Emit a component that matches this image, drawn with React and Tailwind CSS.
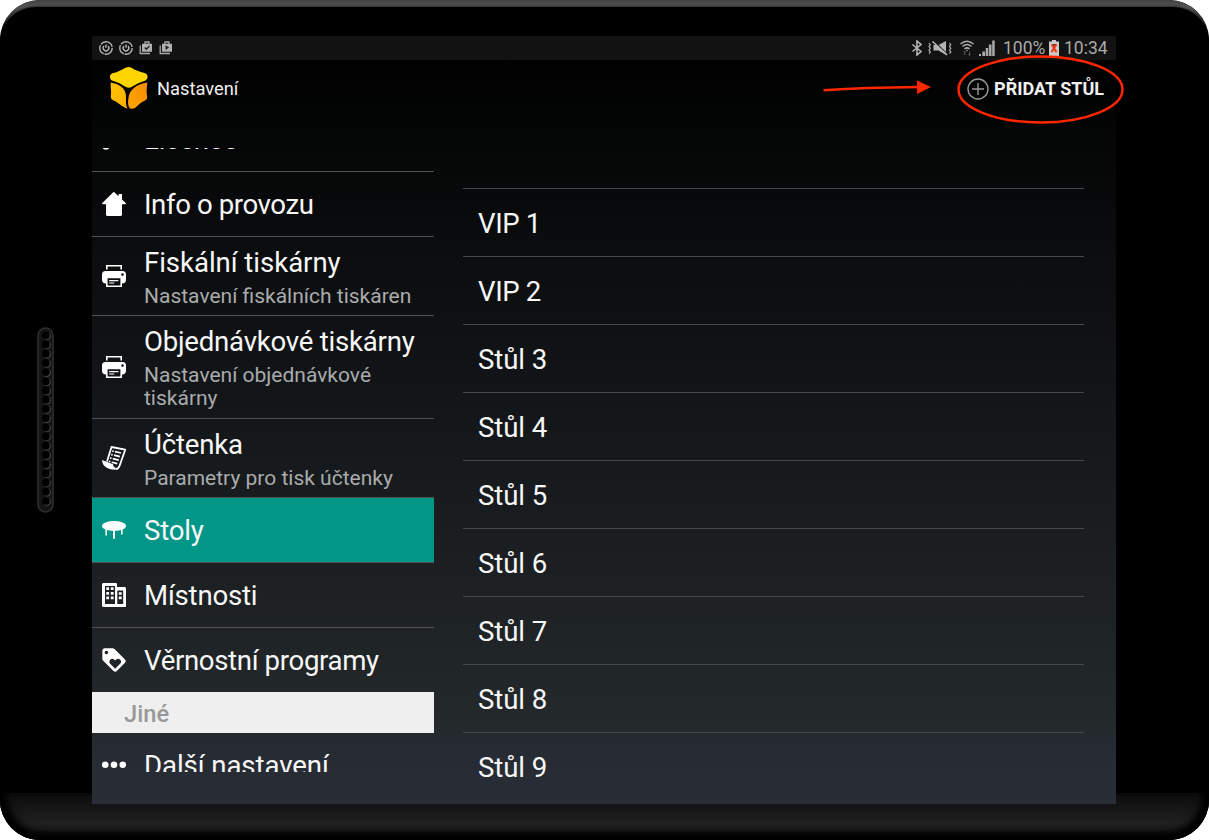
import React from "react";
import { MdLoyalty } from "react-icons/md";

const tables = ["VIP 1", "VIP 2", "Stůl 3", "Stůl 4", "Stůl 5", "Stůl 6", "Stůl 7", "Stůl 8", "Stůl 9"];

function KeyIcon() {
  return (
    <svg className="size-6" viewBox="0 0 24 24" fill="#fff">
      <path d="M15 0a9 9 0 1 1-2.500 17.600L10 18H7v3a1.500 1.500 0 0 1-1.500 1.400H2.500A1.500 1.500 0 0 1 1 21v-5L7 10.500A9 9 0 0 1 15 0z" />
    </svg>
  );
}

function HomeIcon() {
  return (
    <svg className="size-6" viewBox="0 0 24 24" fill="#fff">
      <path d="M12 0 16.600 4.300V2H20v5.500l3.700 3.600c.6.600.3 1.200-.5 1.200H20v10.200c0 .8-.6 1.500-1.500 1.500h-13C4.600 24 4 23.300 4 22.500V12.300H.8c-.8 0-1.100-.6-.5-1.200L11 .5c.4-.4.7-.5 1-.5z" />
    </svg>
  );
}

function PrinterIcon() {
  return (
    <svg className="size-6" viewBox="0 0 24 24">
      <path fill="#fff" d="M4 1h16v4.500h-1.600V2.400H5.600v3.100H4z" />
      <path fill="#fff" fillRule="evenodd" d="M3.500 7h17A3.500 3.500 0 0 1 24 10.500v5a4 4 0 0 1-4 4v3.500H4v-3.500a4 4 0 0 1-4-4v-5A3.500 3.500 0 0 1 3.500 7zM5.600 14.200v7.200h12.800v-7.200zM20.500 9.300a1.300 1.300 0 1 0 0 2.600 1.300 1.300 0 0 0 0-2.600z" />
      <path stroke="#fff" strokeWidth="1.200" d="M7.200 16.600h9.200M7.200 19h5" />
    </svg>
  );
}

function ReceiptIcon() {
  return (
    <svg className="size-6" viewBox="0 0 24 24">
      <path fill="none" stroke="#fff" strokeWidth="1.800" strokeLinejoin="round" d="M5 15.500 9.500 1l13.700 2.700L17.500 20c-.8 2.200-2 3.100-4 3" />
      <path fill="#fff" d="M0 14l11 4.300c.2 2 .8 3 2.700 3.500l-.5 2C7 23.500.5 21.500 0 14z" />
      <path stroke="#fff" strokeWidth="1.700" d="m10.200 5 1.500.4M13 5.700l6 1.300M9.100 8.500l1.500.4M11.900 9.200l6 1.400M8 12l1.500.4M10.800 12.700l6 1.400M7 15.300l1.300.4M9.700 16.200l5.600 1.400" />
    </svg>
  );
}

function TableIcon() {
  return (
    <svg className="size-6" viewBox="0 0 24 24" fill="#fff">
      <ellipse cx="12" cy="8" rx="12" ry="5" />
      <path d="M3.400 11H5v6a.7.700 0 0 1-1.600 0zM11 12h2v8a1 1 0 0 1-2 0zM19 11h1.600v5a.7.700 0 0 1-1.600 0z" />
    </svg>
  );
}

function BuildingIcon() {
  return (
    <svg className="size-6" viewBox="0 0 24 24">
      <path fill="#fff" fillRule="evenodd" d="M1.500 0h12.300c.7 0 1.200.500 1.200 1.200V4h7.500c.9 0 1.500.600 1.500 1.500V24H1.500A1.500 1.500 0 0 1 0 22.500v-21C0 .7.700 0 1.500 0zM3 3v18h10V3zM15.300 7.500V21h5.900V7.500z" />
      <path fill="#fff" d="M4.300 4.300h2.800v2.800H4.300zM8.800 4.300h2.800v2.800H8.800zM4.300 8.900h2.800v2.800H4.300zM8.800 8.900h2.800v2.800H8.800zM4.300 13.500h2.800v2.800H4.300zM8.800 13.500h2.800v2.800H8.800zM16.800 9.200h2.900v2.600h-2.900zM16.800 13.600h2.900v2.700h-2.900z" />
    </svg>
  );
}

function LoyaltyIcon() {
  return <MdLoyalty className="-m-0.5 size-7 shrink-0 text-white" />;
}

function DotsIcon() {
  return (
    <svg className="size-6" viewBox="0 0 24 24" fill="#fff">
      <circle cx="3.200" cy="10.700" r="3.300" />
      <circle cx="12" cy="10.700" r="3.300" />
      <circle cx="20.800" cy="10.700" r="3.300" />
    </svg>
  );
}

function Row({ icon, title, subtitle, className, textClass = "tracking-[-0.2px]" }) {
  return (
    <div className={"flex shrink-0 items-center pl-[10px] " + className}>
      <div className="mr-[18px] flex size-6 shrink-0 items-center">{icon}</div>
      <div className={"min-w-0 flex-1 " + textClass}>
        <div className="whitespace-nowrap text-[27.600px] leading-[33px] text-[#f7f7f7]">{title}</div>
        {subtitle && <div className="mt-[6px] w-[275px] text-[21px] leading-[23px] tracking-normal text-[#a9abac]">{subtitle}</div>}
      </div>
    </div>
  );
}

function DataSaverIcon() {
  return (
    <svg className="size-[14px]" viewBox="0 0 14 14" fill="none" stroke="#b4b4b4">
      <circle cx="7" cy="7" r="6.200" strokeWidth="1.400" strokeDasharray="11 .9 10 1 14 1.900" />
      <path strokeWidth="1.400" d="M5 5a2.800 2.800 0 1 0 4 0M7 3.500v3.200" />
    </svg>
  );
}

function ShopIcon({ children }) {
  return (
    <svg className="size-[14px]" viewBox="0 0 14 14">
      <path fill="none" stroke="#a8a8a8" strokeWidth="1.300" d="M1.200 4.500v8H11M6 3V1h4v2" />
      <path fill="#b0b0b0" d="M3 2.700h10v8H3z" />
      {children}
    </svg>
  );
}

function StatusBar() {
  return (
    <div className="flex h-6 shrink-0 items-center justify-between bg-[#121212] pl-[7px] pr-[8px]">
      <div className="flex gap-[6px]">
        <DataSaverIcon />
        <DataSaverIcon />
        <ShopIcon><path d="m5.700 6.500 1.600 1.700L10.500 5" fill="none" stroke="#222" strokeWidth="1.300" /></ShopIcon>
        <ShopIcon><path d="M6.500 4.300v4.600l3.700-2.300z" fill="#222" /></ShopIcon>
      </div>
      <div className="flex items-center text-[#aaa]">
        <svg className="mr-[5px] h-4 w-3" viewBox="0 0 12 16" fill="none" stroke="#b4b4b4" strokeWidth="1.600">
          <path d="m1.500 4.500 8.500 7L6 15V1l4 3.500-8.500 7" />
        </svg>
        <svg className="mr-[8px] h-4 w-[24px]" viewBox="0 0 24 16">
          <path fill="#b4b4b4" d="M5.500 5h5L18 1v14l-7.500-4.500h-5z" />
          <path stroke="#121212" strokeWidth="1.400" d="m6 1.300 13 12.800" />
          <path stroke="#b4b4b4" strokeWidth="1.600" d="m4.500 1.500 14.500 13.300" />
          <path fill="none" stroke="#aaa" strokeWidth="1.200" d="m1 3 1.300 1.700L1 6.500l1.300 1.800L1 10.200l1.300 1.800L1 13.500M21.500 3l1.300 1.700-1.300 1.800 1.300 1.800-1.300 1.900 1.300 1.800-1.300 1.500" />
        </svg>
        <svg className="mr-[5px] h-4 w-[14px]" viewBox="0 0 14 16" fill="none" stroke="#aaa" strokeWidth="1.500">
          <path d="M.5 4Q7-1.500 13.500 4M2.500 6.500Q7 2.500 11.500 6.500M4.500 9Q7 6.700 9.500 9" />
          <circle cx="7" cy="10.500" r=".8" fill="#aaa" stroke="none" />
          <path stroke="#555" d="M4.500 15v-4M9.500 11.500v4M3.300 12.300l1.200-1.200 1.200 1.200M8.300 14.200l1.200 1.200 1.200-1.200" strokeWidth="1" />
        </svg>
        <svg className="mr-[8px] h-4 w-[16px]" viewBox="0 0 16 16" fill="#aaa">
          <path d="M0 14h2v2H0zM3.300 11.500H6V16H3.300zM6.700 8h2.500v8H6.700zM9.900 4.500h2.600V16H9.900zM13.200.5h2.500V16h-2.500z" />
        </svg>
        <span className="w-[46px] whitespace-nowrap text-[17.500px] leading-6">100%</span>
        <svg className="mr-[5px] h-4 w-[10px]" viewBox="0 0 10 16">
          <path fill="#cacaca" d="M3 0h4v1.500h3V16H0V1.500h3z" />
          <path fill="#333" d="M3 4h4v3H3z" />
          <path d="m2.700 4.200 4.800 8M7.500 4.200l-5 8" stroke="#ed3c17" strokeWidth="2.100" />
        </svg>
        <span className="w-[44px] whitespace-nowrap text-[17.500px] leading-6">10:34</span>
      </div>
    </div>
  );
}

function Logo() {
  return (
    <svg className="h-[42px] w-[38px]" viewBox="0 0 38 42">
      <defs>
        <linearGradient id="leftFace" x1="0" y1="0" x2="1" y2="1"><stop stopColor="#ffc400" /><stop offset="1" stopColor="#ffad00" /></linearGradient>
        <linearGradient id="rightFace" x1="1" y1="0" x2="0" y2="1"><stop stopColor="#f58c00" /><stop offset="1" stopColor="#ffa600" /></linearGradient>
      </defs>
      <path fill="#ffd500" d="M15.500.8q3-1.500 6 0c3.500 2.300 8 4.200 13 5.200 4 .8 4 6.300.5 7.800-5 1.500-9 3.400-13 6q-3.200 1.700-6.500 0C11.500 17.200 8 15.300 2.500 13.800-.8 12.300-1 7.500 2.500 6.300 8 5 12 3 15.500.8z" />
      <path fill="url(#leftFace)" d="M.7 15.500C9 17 15 21 15.900 27.500c.3 4.500-.6 9.500 1.400 14.200C12 40 8 35 3 33.300Q.6 32 .8 29.500C1.800 24.500.2 20 .7 15.500z" />
      <path fill="url(#rightFace)" d="M37.300 15.500c-10 1.200-17 7-18.500 13.500-.8 4.500-1.500 9 1.200 12.500 3 .8 5.500-.2 7.500-2.700 2.500-2.600 5-4.200 8.500-5.800q1.300-1.300 1.200-3.500c-1.200-4.500-.2-9.500.1-14z" />
    </svg>
  );
}

function Speaker() {
  return (
    <svg className="h-[186px] w-[17px]" viewBox="0 0 17 186">
      <rect x="1" y="1" width="15" height="184" rx="7.500" fill="#141414" stroke="#303030" strokeWidth="1.500" />
      {Array.from({ length: 19 }, (_, i) => (
        <g key={i}>
          <circle cx="9.800" cy={8.900 + i * 9.200} r="4.200" fill="#444" />
          <circle cx="8.900" cy={8.300 + i * 9.200} r="3.900" fill="#000" />
        </g>
      ))}
    </svg>
  );
}

export default function App() {
  return (
    <div className="h-[840px] w-[1209px] overflow-hidden bg-white font-['Roboto',sans-serif]">
      <div className="relative isolate flex h-full w-full overflow-hidden rounded-[40px] bg-black pt-9">
        <div className="absolute inset-0 -z-10 rounded-[40px] bg-linear-to-b from-[#424242] from-0% via-[#555] via-[7px] to-[#080808] to-[36px]" />
        <div className="absolute inset-x-0 top-[7px] bottom-0 -z-10 rounded-t-[36px] bg-black shadow-[0_0_3px_#000]" />
        <div className="absolute inset-x-0 bottom-0 -z-10 h-[47px] rounded-b-[40px] bg-linear-to-b from-[#0c0c0c] via-[#202020] via-65% to-[#151515] shadow-[inset_7px_-6px_7px_#000,inset_-7px_-6px_7px_#000]" />

        <div className="flex w-[92px] shrink-0 justify-center pt-[291px] pr-[2px]"><Speaker /></div>

        <main className="flex h-[768px] w-[1024px] shrink-0 flex-col bg-[linear-gradient(to_bottom,#000_0%,#030404_10%,#14171a_50%,#24292c_90.5%,#262a32_91.5%,#292d35_100%)]">
          <StatusBar />
          <header className="flex h-[88px] shrink-0 justify-between pl-[18px] pr-[12px] pt-[7px]">
            <div className="flex h-[42px] items-center">
              <Logo />
              <span className="ml-[9px] pt-px text-[18.300px] text-[#f0f0f0]">Nastavení</span>
            </div>
            <button className="flex h-[43px] items-center">
              <svg className="mr-[5px] size-[22px]" viewBox="0 0 22 22" fill="none" stroke="#999" strokeWidth="1.400">
                <circle cx="11" cy="11" r="10" /><path d="M11 5v12M5 11h12" />
              </svg>
              <span className="whitespace-nowrap pb-px text-[18px] font-bold text-[#f0f0f0]">PŘIDAT STŮL</span>
            </button>
          </header>

          <div className="flex h-[624px] shrink-0">
            <nav className="flex w-[342px] flex-col overflow-hidden">
              <Row className="-mt-[41px] h-[65px] border-b border-[#505152]" icon={<KeyIcon />} title="Licence" />
              <Row className="h-[65px] border-b border-[#505152]" icon={<HomeIcon />} title="Info o provozu" textClass="tracking-[-0.400px]" />
              <Row className="h-[79px] border-b border-[#505152]" icon={<PrinterIcon />} title="Fiskální tiskárny" subtitle="Nastavení fiskálních tiskáren" textClass="pt-[2px] tracking-[-0.050px]" />
              <Row className="h-[103px] border-b border-[#505152]" icon={<PrinterIcon />} title="Objednávkové tiskárny" subtitle="Nastavení objednávkové tiskárny" textClass="tracking-[-0.240px]" />
              <Row className="h-[79px] border-b border-[#505152]" icon={<ReceiptIcon />} title="Účtenka" subtitle="Parametry pro tisk účtenky" textClass="pt-[2px] tracking-[-0.200px]" />
              <Row className="h-[65px] border-b border-[#505152] bg-[#009688]" icon={<TableIcon />} title="Stoly" />
              <Row className="h-[65px] border-b border-[#505152]" icon={<BuildingIcon />} title="Místnosti" />
              <Row className="h-[64px]" icon={<LoyaltyIcon />} title="Věrnostní programy" textClass="tracking-[-0.350px]" />
              <div className="flex h-[41px] shrink-0 items-center bg-[#efefef] pl-8 pt-[5px] text-[23.700px] font-medium text-[#999]">Jiné</div>
              <Row className="h-[65px]" icon={<DotsIcon />} title="Další nastavení" textClass="tracking-[-0.080px]" />
            </nav>

            <section className="ml-[29px] h-[656px] w-[621px] overflow-hidden pt-[40px]">
              {tables.map((name) => (
                <div key={name} className={"flex h-[68px] items-center border-t border-[#46484b] pl-[15px] pt-[3px] text-[27.600px] text-[#f7f7f7] " + (name.startsWith("VIP") ? "tracking-[-0.400px]" : "tracking-[-0.100px]")}>{name}</div>
              ))}
            </section>
          </div>
        </main>

        <svg className="pointer-events-none absolute left-[810px] top-[50px] h-[80px] w-[320px]" viewBox="810 50 320 80" fill="none" stroke="#ff2600" strokeWidth="2.500">
          <ellipse cx="1040.500" cy="89.500" rx="82" ry="33" />
          <path d="M823.500 90.300Q865 87.500 918 87" />
          <path fill="#ff2600" stroke="none" d="m917 80.500 14 6.500-14 7z" />
        </svg>
      </div>
    </div>
  );
}
